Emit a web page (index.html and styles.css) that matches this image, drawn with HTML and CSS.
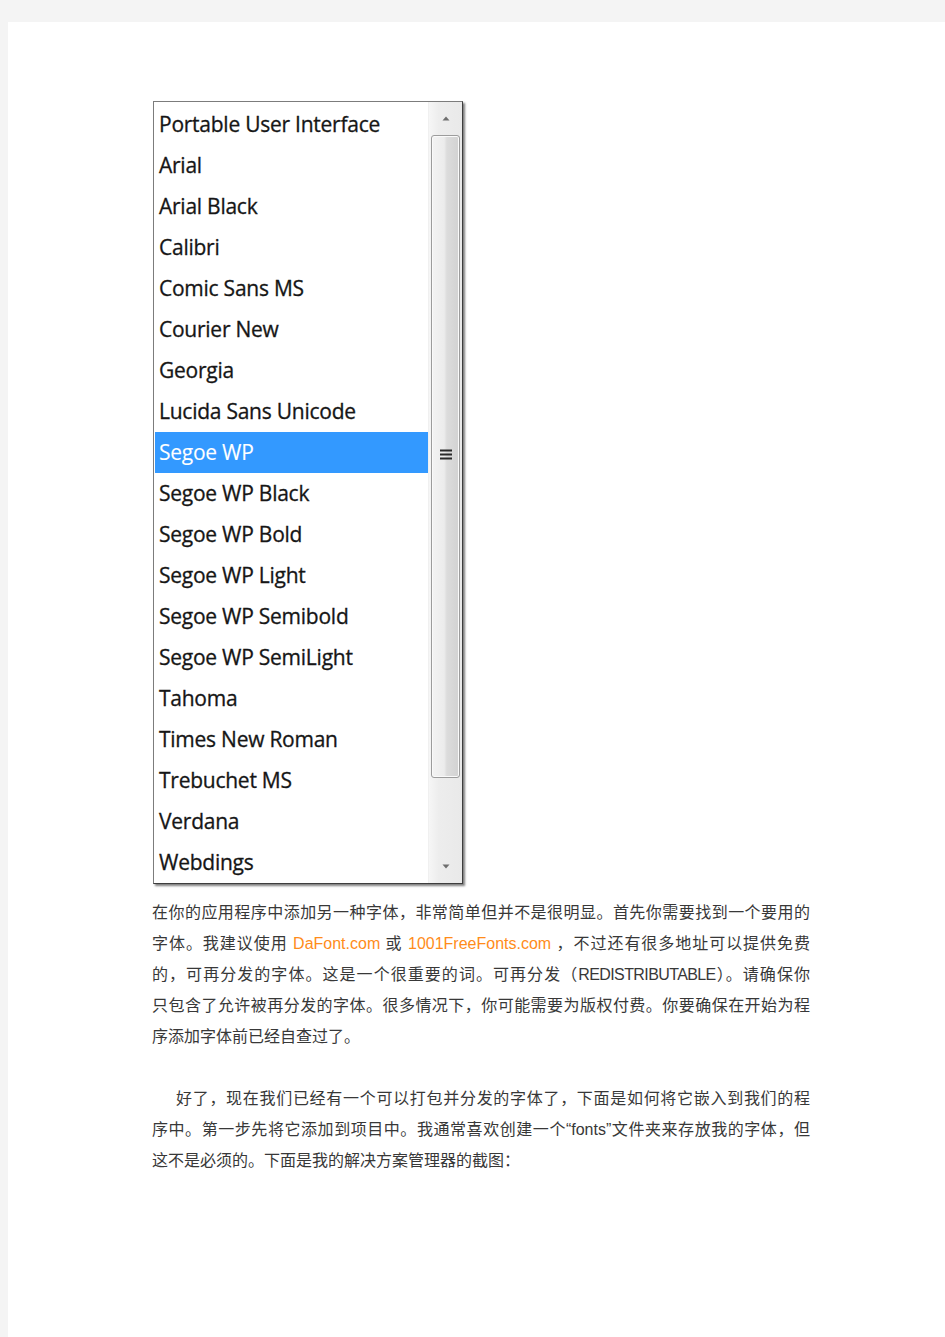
FILE: index.html
```html
<!DOCTYPE html>
<html lang="zh-CN">
<head>
<meta charset="utf-8">
<title>字体</title>
<link rel="stylesheet" href="styles.css">
</head>
<body>
<div class="page">
  <div class="listbox">
    <ul class="items">
      <li>Portable User Interface</li>
      <li>Arial</li>
      <li>Arial Black</li>
      <li>Calibri</li>
      <li>Comic Sans MS</li>
      <li>Courier New</li>
      <li>Georgia</li>
      <li>Lucida Sans Unicode</li>
      <li class="selected">Segoe WP</li>
      <li>Segoe WP Black</li>
      <li>Segoe WP Bold</li>
      <li>Segoe WP Light</li>
      <li>Segoe WP Semibold</li>
      <li>Segoe WP SemiLight</li>
      <li>Tahoma</li>
      <li>Times New Roman</li>
      <li>Trebuchet MS</li>
      <li>Verdana</li>
      <li>Webdings</li>
    </ul>
    <div class="scrollbar">
      <div class="sb-btn sb-up"><svg width="10" height="7" viewBox="0 0 10 7"><path d="M5 1.5 L8.5 5.5 L1.5 5.5 Z" fill="#6e6e6e"/></svg></div>
      <div class="thumb">
        <svg width="14" height="11" viewBox="0 0 14 11"><path d="M1 1.5h12M1 5.5h12M1 9.5h12" stroke="#2a2a2a" stroke-width="1.8"/></svg>
      </div>
      <div class="sb-btn sb-down"><svg width="10" height="7" viewBox="0 0 10 7"><path d="M1.5 1.5 L8.5 1.5 L5 5.5 Z" fill="#6e6e6e"/></svg></div>
    </div>
  </div>

  <p class="para">
    <span class="ln">在你的应用程序中添加另一种字体，非常简单但并不是很明显。首先你需要找到一个要用的</span>
    <span class="ln">字体。我建议使用 <a class="link" href="#">DaFont.com</a> 或 <a class="link" href="#">1001FreeFonts.com</a> ，不过还有很多地址可以提供免费</span>
    <span class="ln">的，可再分发的字体。这是一个很重要的词。可再分发（<span class="en narrow">REDISTRIBUTABLE</span>）。请确保你</span>
    <span class="ln">只包含了允许被再分发的字体。很多情况下，你可能需要为版权付费。你要确保在开始为程</span>
    <span class="end">序添加字体前已经自查过了。</span>
  </p>

  <p class="para">
    <span class="ln indent">好了，现在我们已经有一个可以打包并分发的字体了，下面是如何将它嵌入到我们的程</span>
    <span class="ln">序中。第一步先将它添加到项目中。我通常喜欢创建一个<span class="en">“fonts”</span>文件夹来存放我的字体，但</span>
    <span class="end">这不是必须的。下面是我的解决方案管理器的截图：</span>
  </p>
</div>
</body>
</html>
```

FILE: styles.css
```css
html, body {
  margin: 0;
  padding: 0;
  background: #f4f4f4;
}

.page {
  margin: 22px 0 0 8px;
  padding: 79px 0 40px 144px;
  background: #ffffff;
  min-height: calc(100vh - 22px);
  box-sizing: border-box;
}

/* ---------- list box ---------- */
.listbox {
  display: flex;
  width: 310px;
  height: 783px;
  margin-left: 1px;
  box-sizing: border-box;
  border: 1px solid #7c7c7c;
  border-right-color: #3e3e3e;
  border-bottom-color: #3e3e3e;
  background: #ffffff;
  box-shadow: 2px 2px 2px rgba(0, 0, 0, 0.5);
}

.items {
  list-style: none;
  margin: 0;
  padding: 2px 0 0 1px;
  flex: 1;
  overflow: hidden;
}

.items li {
  height: 41px;
  line-height: 41px;
  padding-left: 4px;
  font-family: "Open Sans", "Noto Sans", sans-serif;
  font-size: 21px;
  letter-spacing: -0.25px;
  color: #161616;
  -webkit-text-stroke: 0.3px currentColor;
  white-space: nowrap;
}

.items li.selected {
  background: #3399ff;
  color: #ffffff;
  -webkit-text-stroke: 0.1px currentColor;
}

.scrollbar {
  width: 33px;
  display: flex;
  flex-direction: column;
  background: linear-gradient(to right, #f6f6f6 0%, #ededed 30%, #e9e9e9 100%);
  border-left: 1px solid #f0f0f0;
}

.sb-btn {
  display: flex;
  align-items: center;
  justify-content: center;
}

.sb-up {
  height: 32px;
}

.sb-down {
  height: 34px;
  margin-top: auto;
}

.thumb {
  margin: 1px 2px 0 2px;
  height: 643px;
  box-sizing: border-box;
  border: 1px solid #9c9c9c;
  border-radius: 3px;
  box-shadow: inset 0 0 0 1px #fafafa;
  background: linear-gradient(to right, #f3f3f3 0%, #ececec 45%, #dcdcdc 55%, #d2d2d2 100%);
  display: flex;
  align-items: center;
  justify-content: center;
  padding-bottom: 4px;
}

/* ---------- paragraphs ---------- */
.para {
  width: 658px;
  margin: 13px 0 31px 0;
  font-family: "Liberation Sans", "Noto Sans CJK SC", sans-serif;
  font-size: 16px;
  line-height: 31px;
  color: #383838;
}

.para + .para {
  margin-top: 0;
}

.ln {
  display: block;
  text-align: justify;
  text-align-last: justify;
}

.end {
  display: block;
}

.indent {
  text-indent: 24px;
}

.link {
  color: #ff8c1a;
  text-decoration: none;
}

.narrow {
  letter-spacing: -0.6px;
}
```
